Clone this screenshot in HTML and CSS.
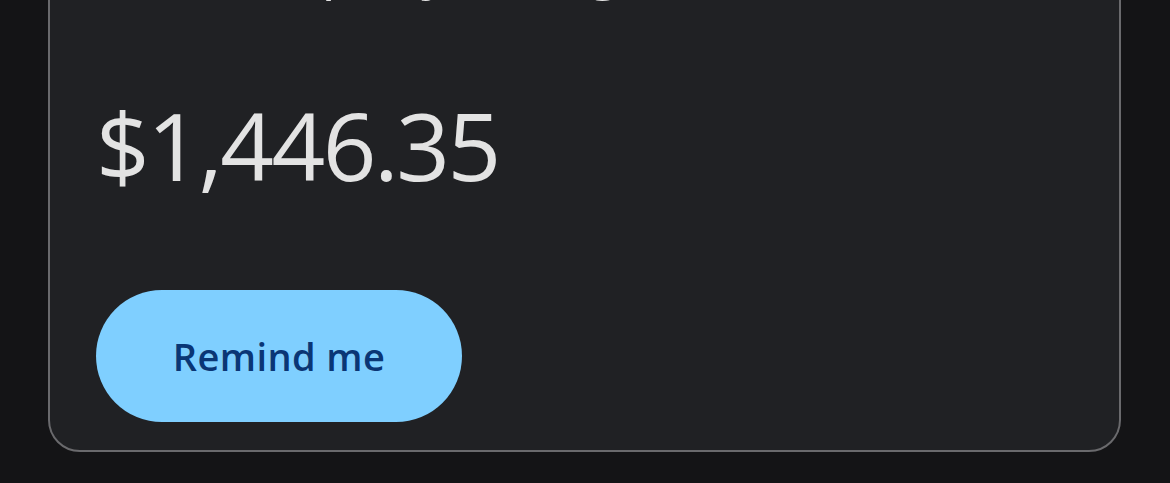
FILE: index.html
```html
<!DOCTYPE html>
<html lang="en">
<head>
<meta charset="utf-8">
<title>Bill reminder</title>
<link rel="stylesheet" href="styles.css">
</head>
<body>
  <main class="page">
    <section class="card">
      <h2 class="title">Gas company billing</h2>
      <p class="amount">$1,446.35</p>
      <button class="remind" type="button">Remind me</button>
    </section>
  </main>
</body>
</html>
```
FILE: styles.css
```css
html, body {
  margin: 0;
  padding: 0;
  background: #141416;
  height: 100%;
  overflow: hidden;
}

.page {
  padding: 0 49px 0 48px;
}

.card {
  margin-top: -84px;
  background: #202124;
  border: 2px solid #6a6a6d;
  border-radius: 32px;
  padding: 0 46px 28px 46px;
  display: flex;
  flex-direction: column;
  align-items: flex-start;
}

.title {
  margin: 0;
  padding-top: 7px;
  font-family: "Open Sans", sans-serif;
  font-weight: 400;
  font-size: 56px;
  line-height: 80px;
  color: #e3e3e3;
}

.amount {
  margin: 0;
  margin-top: 85px;
  font-family: "Open Sans", sans-serif;
  font-weight: 400;
  font-size: 94px;
  line-height: 110px;
  letter-spacing: -2.5px;
  color: #e3e3e3;
}

.remind {
  margin-top: 90px;
  width: 366px;
  height: 132px;
  border: none;
  border-radius: 66px;
  background: #7fcfff;
  color: #0a3675;
  font-family: "Open Sans", sans-serif;
  font-weight: 600;
  font-size: 38px;
  letter-spacing: 0.4px;
  padding: 0;
  cursor: pointer;
}
```
